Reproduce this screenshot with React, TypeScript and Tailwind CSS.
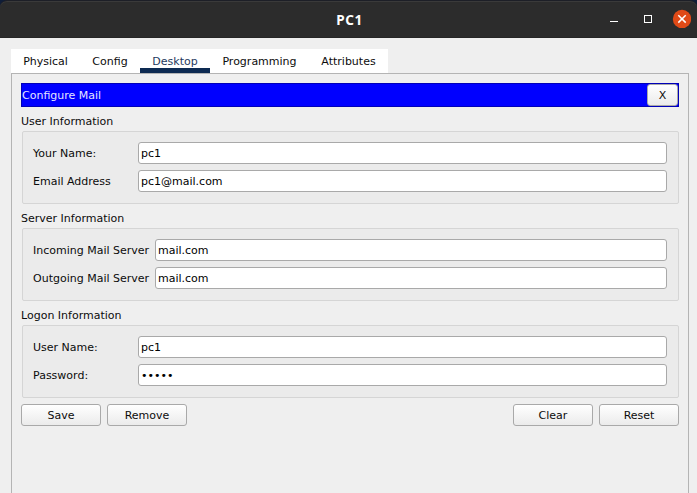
import React from "react";

const tabs = [
  { label: "Physical", width: "w-[69px]" },
  { label: "Config", width: "w-[60px]" },
  { label: "Desktop", width: "w-[70px]" },
  { label: "Programming", width: "w-[99px]" },
  { label: "Attributes", width: "w-[79px]" },
];

function TitleBar() {
  return (
    <div className="bg-[#0f1d38]">
      <header className="relative flex h-[38px] items-center justify-end rounded-t-[7px] border-t border-[#1d1f27] bg-[#2c2c2c] pr-[6px] shadow-[inset_0_1px_0_#3a3a3a,inset_0_-1px_0_#262626]">
        <h1 className="absolute inset-x-0 top-[9px] pl-[2px] text-center font-['Noto_Sans',sans-serif] text-[13.5px] leading-5 font-bold tracking-[0.6px] text-white">
          PC1
        </h1>
        <svg width="85" height="21" viewBox="0 0 85 21" className="relative" fill="none">
          <path d="M4 12.5h8" stroke="#fff" />
          <rect x="38.5" y="6.5" width="7" height="7" stroke="#fff" />
          <circle cx="76" cy="9.9" r="9.2" fill="#e04a17" />
          <path d="M72.3 6.2l7.4 7.4M79.7 6.2l-7.4 7.4" stroke="#fff" strokeWidth="1.5" />
        </svg>
      </header>
    </div>
  );
}

function Button({ label, width = "w-20" }: { label: string; width?: string }) {
  return (
    <button
      type="button"
      className={`${width} h-[22px] shrink-0 rounded-[3px] border border-[#a9a9a9] bg-linear-to-b from-white to-[#ebebeb] text-center`}
    >
      <span className="block h-5 leading-[22px]">{label}</span>
    </button>
  );
}

type Row = { label: string; value: string };

function Section({ title, rows, labelWidth }: { title: string; rows: Row[]; labelWidth: string }) {
  return (
    <section className="mb-[6px]">
      <h2 className="h-[18px] leading-[18px]">{title}</h2>
      <div className="ml-px flex h-[73px] flex-col gap-[6px] rounded-[2px] border border-[#d5d5d5] bg-[#ebebeb] pt-[10px] pr-[11px] pl-[10px]">
        {rows.map((row) => (
          <div key={row.label} className="flex h-[22px]">
            <span className={`${labelWidth} shrink-0 leading-6`}>{row.label}</span>
            <div className="h-[22px] flex-1 rounded-[3px] border border-[#a9a9a9] bg-white pl-[2px] leading-[22px] text-black">
              {row.value}
            </div>
          </div>
        ))}
      </div>
    </section>
  );
}

export default function App() {
  return (
    <div className="flex h-[493px] w-[697px] flex-col overflow-hidden bg-[#efefef] font-['DejaVu_Sans',sans-serif] text-[11px] text-[#0c0c0c]">
      <TitleBar />
      <nav className="mt-[11px] ml-[11px] flex h-6 w-[377px] bg-white">
        {tabs.map((tab) => (
          <div
            key={tab.label}
            className={`${tab.width} h-6 text-center leading-[25px] ${
              tab.label === "Desktop" ? "border-b-5 border-[#0d2a52] text-[#1f3a60]" : ""
            }`}
          >
            {tab.label}
          </div>
        ))}
      </nav>
      <main className="mr-[8px] ml-[11px] flex-1 border border-b-0 border-[#b4b4b4] px-[9px] pt-[9px]">
        <div className="flex h-6 justify-between border border-[#0000b8] bg-[#0000ff] text-[#e4e4ff]">
          <span className="leading-6">Configure Mail</span>
          <div className="flex text-[#0c0c0c]">
            <Button label="X" width="w-[31px]" />
          </div>
        </div>
        <div className="pt-[6px]">
          <Section
            title="User Information"
            labelWidth="w-[105px]"
            rows={[
              { label: "Your Name:", value: "pc1" },
              { label: "Email Address", value: "pc1@mail.com" },
            ]}
          />
          <Section
            title="Server Information"
            labelWidth="w-[122px]"
            rows={[
              { label: "Incoming Mail Server", value: "mail.com" },
              { label: "Outgoing Mail Server", value: "mail.com" },
            ]}
          />
          <Section
            title="Logon Information"
            labelWidth="w-[105px]"
            rows={[
              { label: "User Name:", value: "pc1" },
              { label: "Password:", value: "•••••" },
            ]}
          />
        </div>
        <div className="flex gap-[6px]">
          <Button label="Save" />
          <Button label="Remove" />
          <div className="flex-1" />
          <Button label="Clear" />
          <Button label="Reset" />
        </div>
      </main>
    </div>
  );
}
